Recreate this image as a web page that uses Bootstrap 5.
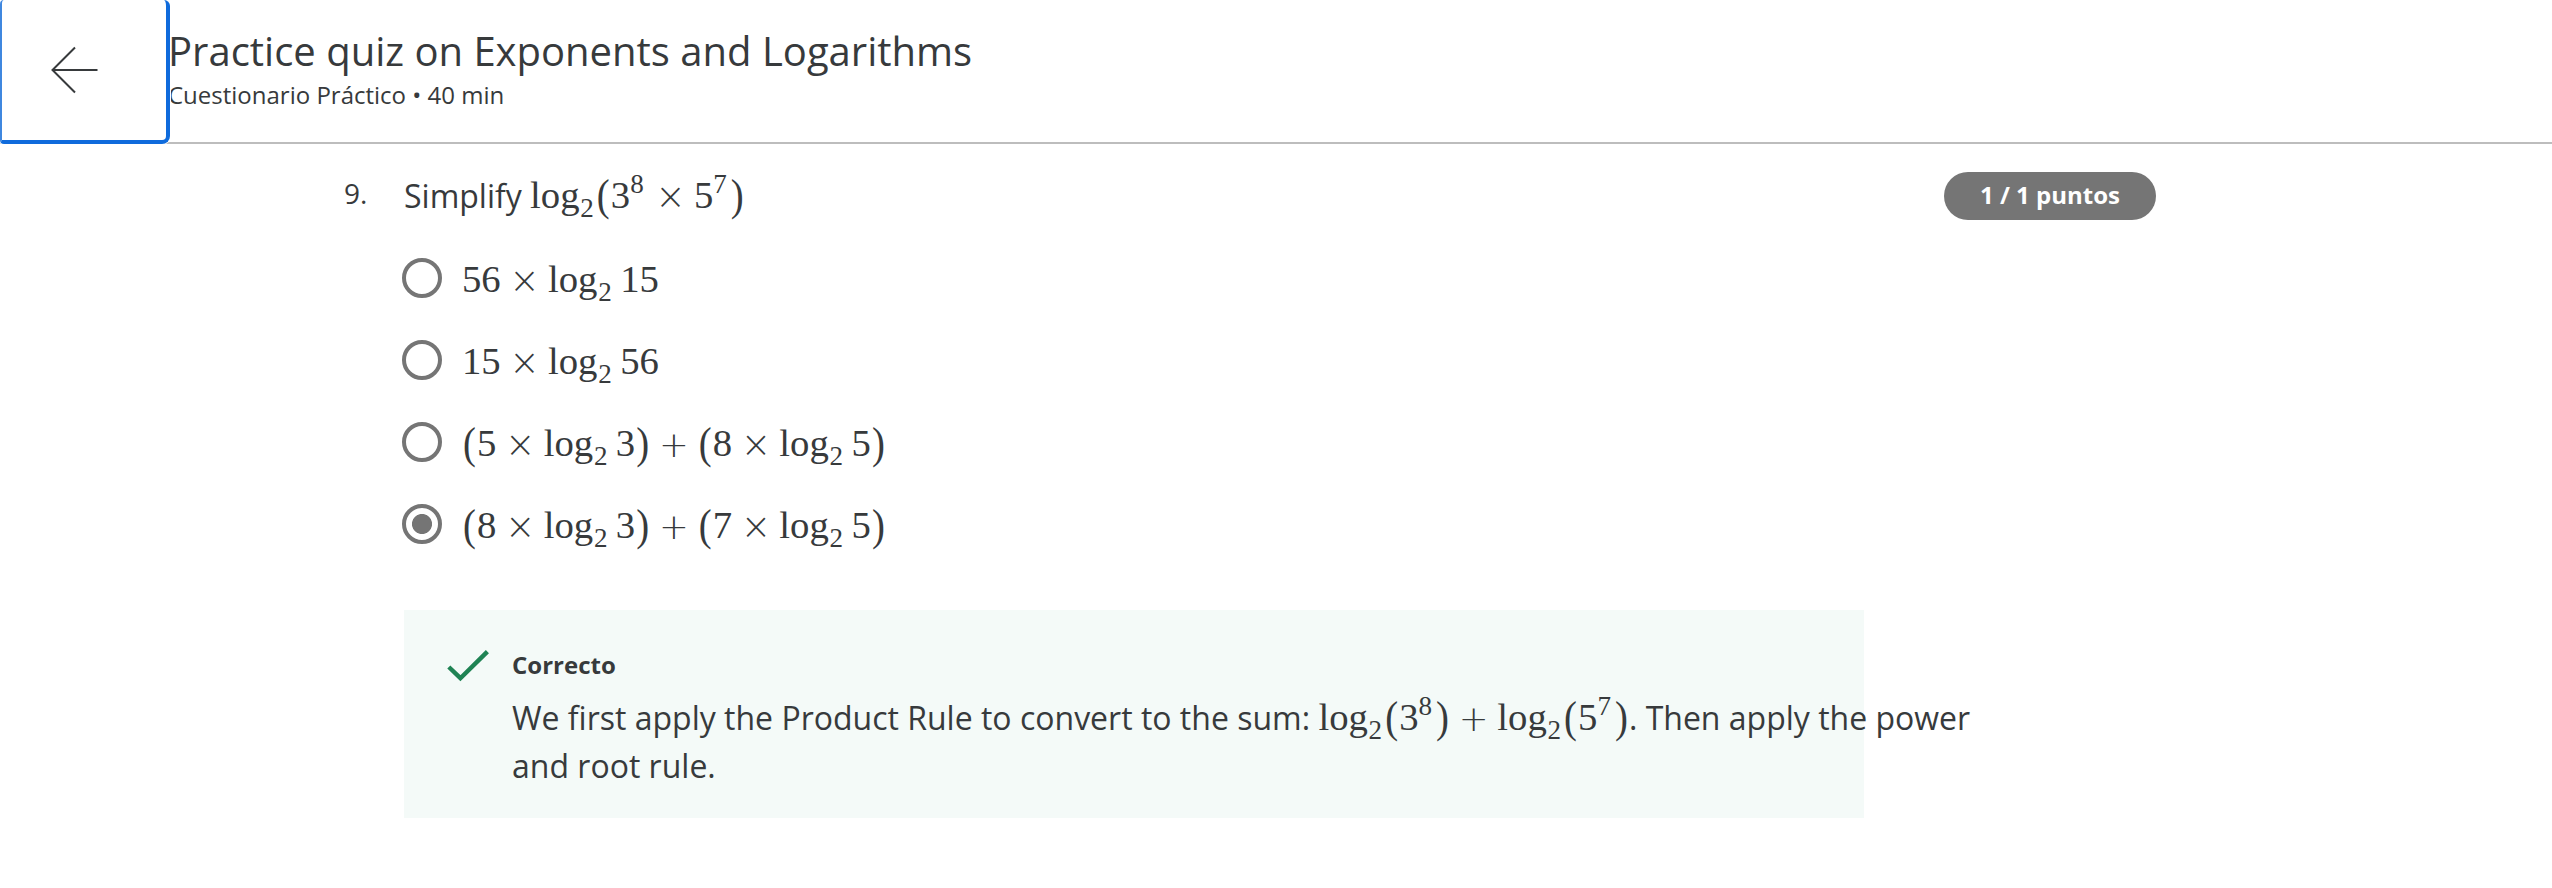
<!DOCTYPE html>
<html lang="es">
<head>
<meta charset="utf-8">
<meta name="viewport" content="width=device-width, initial-scale=1">
<title>Practice quiz on Exponents and Logarithms</title>
<link href="https://cdn.jsdelivr.net/npm/bootstrap@5.3.0/dist/css/bootstrap.min.css" rel="stylesheet">
<style>
body{font-family:"Open Sans",sans-serif;color:#373a3c;background:#fff;overflow:hidden}
.quiz-header{height:144px;border-bottom:2px solid #bdbdbd}
.back-btn{width:170px;height:144px;border:4px solid #0f6bdc;border-width:0 4px 4px 2px;border-left-color:#3f87df;border-radius:4px 6px 8px 4px;background:#fff;box-shadow:0 0 0 1px #fff;z-index:1;padding:0}
.back-btn svg{display:block;margin-left:48px}
.titles{margin-left:-2px;padding-top:27px}
.quiz-title{font-size:40px;line-height:48px;font-weight:400}
.quiz-sub{font-size:24px;line-height:36px;margin-top:2px}
.question{margin-left:344px;width:1812px;padding-top:28px}
.q-num{width:60px;font-size:28px;line-height:40px;padding-top:1px}
.q-text{font-size:32px;line-height:48px}
.points{width:212px;height:48px;line-height:46px;font-size:24px;background:#757575;color:#fff}
.answers{margin-left:402px;padding-top:38px}
.answer{height:82px}
.answer .form-check-input{width:40px;height:40px;border:4px solid #757575;margin:0 20px 0 0;background:#fff;box-shadow:none}
.answer .form-check-input:checked{background:radial-gradient(circle,#757575 9.6px,#fff 10.4px)}
.answer .tex{line-height:42px;font-size:38.72px}
.feedback{width:1460px;height:208px;margin-left:404px;margin-top:24px;background:#f4faf8;padding:37px 0 0 42px}
.feedback svg{width:44px;height:36px;margin-right:22px}
.fb-body{width:1480px}
.fb-head{font-size:24px;line-height:36px;margin-bottom:11px}
.fb-text{font-size:32px;line-height:48px}
.tex{font-family:"Liberation Serif",serif;font-size:1.21em;line-height:0;white-space:nowrap}
.tex span{display:inline-block;line-height:0;text-align:center}
.tex .sb,.tex .sp{font-size:.7em;width:.571em;text-align:left}
.tex .sb{vertical-align:-.349em;margin-left:.028em}
.tex .sp{vertical-align:.57em;margin-right:.035em}
.tex .pn{width:.389em;transform:scaleY(1.165)}
.tex .tm,.tex .pl{font-family:"DejaVu Sans",sans-serif;font-weight:200}
.tex .tm{font-size:.94em;width:.828em;margin:0 .236em;vertical-align:-.035em}
.tex .pl{font-size:.92em;width:.846em;margin:0 .243em;vertical-align:-.02em}
.tex .th{width:.167em}
</style>
</head>
<body>
<header class="quiz-header d-flex align-items-start">
  <button class="back-btn position-relative flex-shrink-0 d-flex align-items-center" type="button" aria-label="Volver">
    <svg width="50" height="50" viewBox="0 0 50 50" fill="none" stroke="#373a3c" stroke-width="2"><path d="M25 2.5 2.5 25 25 47.5M2.5 25H47.5"/></svg>
  </button>
  <div class="titles">
    <h1 class="quiz-title mb-0">Practice quiz on Exponents and Logarithms</h1>
    <div class="quiz-sub">Cuestionario Práctico • 40 min</div>
  </div>
</header>
<main>
  <div class="question d-flex align-items-start">
    <div class="q-num">9.</div>
    <div class="q-text flex-grow-1">Simplify <span class="tex">log<span class="sb">2</span><span class="pn">(</span>3<span class="sp">8</span><span class="tm">×</span>5<span class="sp">7</span><span class="pn">)</span></span></div>
    <div class="points rounded-pill text-center fw-bold">1 / 1 puntos</div>
  </div>
  <div class="answers">
    <label class="answer d-flex align-items-start"><input class="form-check-input" type="radio" name="q9"><span class="tex">56<span class="tm">×</span>log<span class="sb">2</span><span class="th"></span>15</span></label>
    <label class="answer d-flex align-items-start"><input class="form-check-input" type="radio" name="q9"><span class="tex">15<span class="tm">×</span>log<span class="sb">2</span><span class="th"></span>56</span></label>
    <label class="answer d-flex align-items-start"><input class="form-check-input" type="radio" name="q9"><span class="tex"><span class="pn">(</span>5<span class="tm">×</span>log<span class="sb">2</span><span class="th"></span>3<span class="pn">)</span><span class="pl">+</span><span class="pn">(</span>8<span class="tm">×</span>log<span class="sb">2</span><span class="th"></span>5<span class="pn">)</span></span></label>
    <label class="answer d-flex align-items-start"><input class="form-check-input" type="radio" name="q9" checked><span class="tex"><span class="pn">(</span>8<span class="tm">×</span>log<span class="sb">2</span><span class="th"></span>3<span class="pn">)</span><span class="pl">+</span><span class="pn">(</span>7<span class="tm">×</span>log<span class="sb">2</span><span class="th"></span>5<span class="pn">)</span></span></label>
  </div>
  <div class="feedback d-flex align-items-start">
    <svg class="flex-shrink-0" viewBox="0 0 44 36" fill="none" stroke="#1f8354" stroke-width="4.4"><path d="M2.8 20 14.4 31.2 41.4 4.6"/></svg>
    <div class="fb-body flex-shrink-0">
      <div class="fb-head fw-bold">Correcto</div>
      <div class="fb-text">We first apply the Product Rule to convert to the sum: <span class="tex">log<span class="sb">2</span><span class="pn">(</span>3<span class="sp">8</span><span class="pn">)</span><span class="pl">+</span>log<span class="sb">2</span><span class="pn">(</span>5<span class="sp">7</span><span class="pn">)</span></span>. Then apply the power and root rule.</div>
    </div>
  </div>
</main>
<script src="https://cdn.jsdelivr.net/npm/bootstrap@5.3.0/dist/js/bootstrap.bundle.min.js"></script>
</body>
</html>
